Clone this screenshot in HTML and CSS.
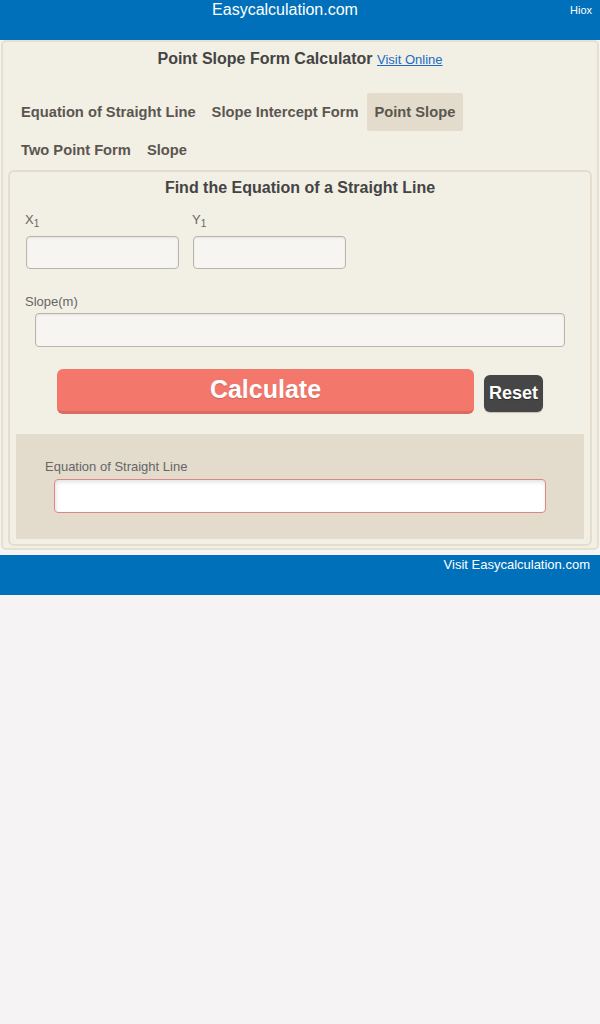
FILE: index.html
```html
<!DOCTYPE html>
<html>
<head>
<meta charset="utf-8">
<link rel="stylesheet" href="styles.css">
</head>
<body>
<div class="header">
  <div class="brand">Easycalculation.com</div>
  <div class="hiox">Hiox</div>
</div>
<div class="card">
  <div class="title">Point Slope Form Calculator <a class="visit" href="#">Visit Online</a></div>
  <ul class="tabs">
    <li class="tab">Equation of Straight Line</li>
    <li class="tab">Slope Intercept Form</li>
    <li class="tab active">Point Slope</li>
    <li class="tab">Two Point Form</li>
    <li class="tab">Slope</li>
  </ul>
  <div class="panel">
    <div class="panel-title">Find the Equation of a Straight Line</div>
    <div class="fields">
      <div class="field">
        <label class="lbl">X<sub>1</sub></label>
        <input class="inp short" type="text">
      </div>
      <div class="field">
        <label class="lbl">Y<sub>1</sub></label>
        <input class="inp short" type="text">
      </div>
    </div>
    <div class="slope">
      <label class="lbl">Slope(m)</label>
      <input class="inp wide" type="text">
    </div>
    <div class="buttons">
      <button class="calc">Calculate</button>
      <button class="reset">Reset</button>
    </div>
    <div class="result">
      <label class="lbl">Equation of Straight Line</label>
      <input class="out" type="text">
    </div>
  </div>
</div>
<div class="footer">
  <a class="foot-link" href="#">Visit Easycalculation.com</a>
</div>
</body>
</html>
```

FILE: styles.css
```css
html, body {
  margin: 0;
  padding: 0;
  background: #f5f3f4;
  font-family: "Liberation Sans", Arial, sans-serif;
}
.header {
  height: 40px;
  background: #0070ba;
  display: flex;
  color: #fff;
}
.brand {
  flex: 0 0 570px;
  text-align: center;
  font-size: 16px;
  line-height: 20px;
}
.hiox {
  flex: 1;
  font-size: 11px;
  line-height: 20px;
  text-align: left;
}
.card {
  margin: 0 1px;
  border: 2px solid #e6e0d1;
  border-radius: 5px;
  background: #f2efe4;
  padding: 0 5px 2px;
}
.title {
  text-align: center;
  font-size: 16px;
  font-weight: bold;
  color: #444;
  line-height: 20px;
  padding-top: 7px;
}
.visit {
  font-size: 13px;
  font-weight: normal;
  color: #1a6cc4;
  text-decoration: underline;
}
.tabs {
  list-style: none;
  margin: 23px 0 1px 5px;
  padding: 0;
  max-width: 470px;
  display: flex;
  flex-wrap: wrap;
}
.tab {
  font-size: 14.7px;
  font-weight: bold;
  color: #5b5650;
  line-height: 18px;
  padding: 10px 8px;
}
.tab.active {
  background: #e3dccc;
  border-radius: 2px;
}
.panel {
  border: 2px solid #e4ddce;
  border-radius: 6px;
  background: #f2efe4;
  padding: 0 0 5px;
}
.panel-title {
  text-align: center;
  font-size: 16px;
  font-weight: bold;
  color: #444;
  line-height: 20px;
  padding-top: 6px;
}
.lbl {
  display: block;
  font-size: 13px;
  line-height: 16px;
  color: #666;
}
.lbl sub {
  font-size: 10px;
  vertical-align: -3px;
  line-height: 0;
}
.fields {
  display: flex;
  gap: 13px;
  margin-top: 14px;
  padding-left: 15px;
}
.field .inp {
  margin-left: 1px;
}
.inp {
  display: block;
  box-sizing: border-box;
  height: 33px;
  margin-top: 8px;
  border: 1px solid #b9b5ad;
  border-radius: 4px;
  background: #f6f5f2;
  box-shadow: inset 0 1px 2px rgba(0,0,0,0.08);
  font-size: 14px;
  padding: 0 6px;
  outline: none;
}
.inp.short {
  width: 153px;
}
.slope {
  margin-top: 25px;
  padding-left: 15px;
}
.inp.wide {
  width: 530px;
  height: 34px;
  margin-left: 10px;
  margin-top: 3px;
}
.buttons {
  display: flex;
  align-items: flex-start;
  margin-top: 22px;
  padding-left: 47px;
}
.calc {
  width: 417px;
  height: 45px;
  border: none;
  border-bottom: 3px solid #dc6a61;
  border-radius: 6px;
  background: #f3776b;
  color: #fff;
  font-family: "Liberation Sans", Arial, sans-serif;
  font-size: 25px;
  font-weight: bold;
  line-height: 30px;
  padding: 0 0 2px;
  text-shadow: 0 1px 1px rgba(0,0,0,0.15);
}
.reset {
  width: 59px;
  height: 37px;
  margin-left: 10px;
  margin-top: 6px;
  border: none;
  border-radius: 6px;
  background: #464646;
  box-shadow: 0 1px 1px rgba(0,0,0,0.2);
  color: #fff;
  font-family: "Liberation Sans", Arial, sans-serif;
  font-size: 18px;
  font-weight: bold;
  padding: 0;
  text-shadow: 0 1px 1px rgba(0,0,0,0.4);
}
.result {
  margin: 20px 6px 0;
  background: #e3dccc;
  padding: 25px 0 26px 29px;
}
.out {
  display: block;
  box-sizing: border-box;
  width: 492px;
  height: 34px;
  margin: 4px 0 0 9px;
  border: 1px solid #e08585;
  border-radius: 4px;
  background: #fff;
  box-shadow: inset 1px 2px 4px rgba(0,0,0,0.12);
  outline: none;
}
.footer {
  margin-top: 5px;
  height: 40px;
  background: #0070ba;
  text-align: right;
  padding-right: 10px;
}
.foot-link {
  color: #fff;
  text-decoration: none;
  font-size: 13px;
  line-height: 18px;
  display: inline-block;
  padding-top: 0;
}
```
